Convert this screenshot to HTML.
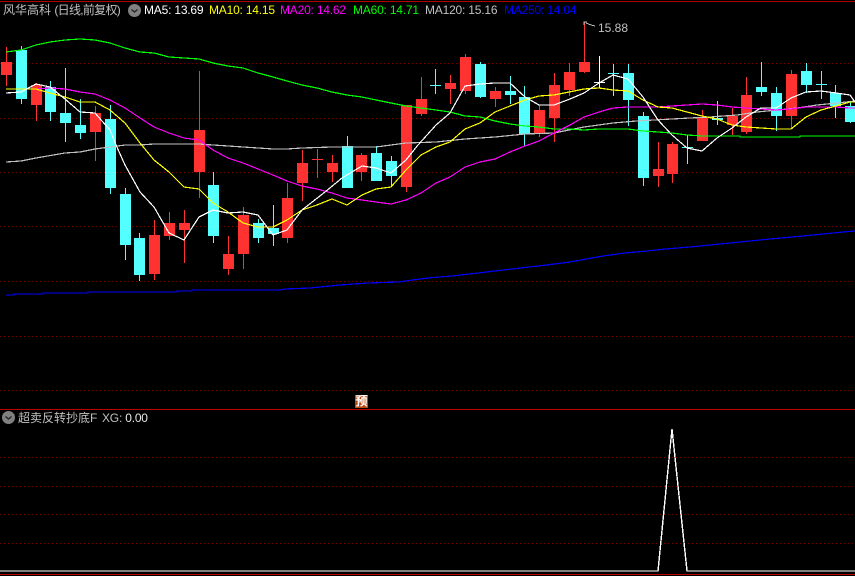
<!DOCTYPE html>
<html><head><meta charset="utf-8">
<style>
html,body{margin:0;padding:0;background:#000;width:855px;height:576px;overflow:hidden}
#w{position:relative;width:855px;height:576px;background:#000;overflow:hidden}
svg{position:absolute;left:0;top:0}
.t{position:absolute;white-space:pre;font:12px/14px "Liberation Sans","WenQuanYi Zen Hei",sans-serif;color:#c0c0c0}
.m{letter-spacing:-.2px}
.c{position:absolute;width:13px;height:13px;border-radius:50%;background:#808080}
.c svg{left:0;top:0}
</style></head><body><div id="w">
<svg width="855" height="576" viewBox="0 0 855 576" shape-rendering="crispEdges">
<g fill="none" stroke="#7a0000" stroke-width="1" stroke-dasharray="1 3">
<path d="M0 63.5H855M0 118.5H855M0 172.5H855M0 226.5H855M0 281.5H855M0 336.5H855M0 390.5H855"/>
<path d="M0 457.5H855M0 486.5H855M0 514.5H855M0 543.5H855"/>
</g>
<rect x="0" y="1" width="855" height="1" fill="#b00000"/>
<rect x="0" y="409" width="855" height="1" fill="#c00000"/>
<rect x="0" y="574" width="855" height="1" fill="#c00000"/>
<path fill="#ff3232" d="M1 62h11v13h-11zM6 47h1v39h-1z
M31 85h11v20h-11zM36 83h1v38h-1z
M90 113h11v19h-11zM95 106h1v55h-1z
M149 235h11v39h-11zM154 220h1v60h-1z
M164 223h11v13h-11zM169 212h1v28h-1z
M179 223h11v7h-11zM184 210h1v53h-1z
M194 130h11v42h-11zM199 71h1v127h-1z
M223 254h11v15h-11zM228 236h1v39h-1z
M238 215h11v39h-11zM243 207h1v62h-1z
M282 198h11v40h-11zM287 183h1v60h-1z
M297 163h11v20h-11zM302 150h1v51h-1z
M312 159h11v1h-11zM317 149h1v29h-1z
M327 163h11v9h-11zM332 155h1v27h-1z
M356 155h11v17h-11zM361 153h1v28h-1z
M401 105h11v82h-11zM406 105h1v87h-1z
M416 99h11v15h-11zM421 77h1v39h-1z
M445 83h11v6h-11zM450 75h1v29h-1z
M460 57h11v34h-11zM465 54h1v40h-1z
M490 91h11v8h-11zM495 87h1v20h-1z
M534 110h11v24h-11zM539 105h1v32h-1z
M549 85h11v33h-11zM554 73h1v69h-1z
M564 72h11v18h-11zM569 63h1v33h-1z
M579 62h11v10h-11zM584 22h1v51h-1z
M653 169h11v7h-11zM658 142h1v45h-1z
M667 144h11v30h-11zM672 142h1v41h-1z
M697 118h11v23h-11zM702 110h1v31h-1z
M727 116h11v9h-11zM732 108h1v27h-1z
M741 95h11v37h-11zM746 77h1v57h-1z
M786 74h11v42h-11zM791 70h1v58h-1z"/>
<path fill="#54ffff" d="M16 50h11v49h-11zM21 46h1v58h-1z
M45 87h11v25h-11zM50 81h1v40h-1z
M60 113h11v10h-11zM65 68h1v74h-1z
M75 125h11v8h-11zM80 99h1v40h-1z
M105 119h11v69h-11zM110 105h1v89h-1z
M120 194h11v51h-11zM125 188h1v72h-1z
M134 238h11v37h-11zM139 233h1v48h-1z
M208 185h11v51h-11zM213 172h1v71h-1z
M253 223h11v15h-11zM258 219h1v24h-1z
M268 228h11v6h-11zM273 205h1v41h-1z
M342 146h11v42h-11zM347 136h1v52h-1z
M371 153h11v28h-11zM376 146h1v35h-1z
M386 161h11v15h-11zM391 156h1v30h-1z
M430 85h11v1h-11zM435 69h1v25h-1z
M475 64h11v33h-11zM480 62h1v36h-1z
M505 91h11v4h-11zM510 76h1v28h-1z
M519 97h11v37h-11zM524 86h1v60h-1z
M608 73h11v1h-11zM613 64h1v32h-1z
M623 73h11v27h-11zM628 64h1v62h-1z
M638 116h11v62h-11zM643 112h1v74h-1z
M682 147h11v1h-11zM687 135h1v29h-1z
M712 118h11v2h-11zM717 101h1v24h-1z
M756 87h11v5h-11zM761 62h1v34h-1z
M771 93h11v23h-11zM776 87h1v44h-1z
M801 71h11v14h-11zM806 63h1v30h-1z
M816 84h11v1h-11zM821 71h1v28h-1z
M830 93h11v13h-11zM835 85h1v33h-1z
M845 106h10v16h-10zM850 102h1v21h-1z"/>
<path fill="#ffffff" d="M594 82h11v1h-11zM599 56h1v32h-1z"/>
<g fill="none" stroke-width="1.2">
<polyline stroke="#c0c0c0" points="6,162 21,161 36,158 65,153 80,152 95,149 110,147 125,145 140,145 154,144 199,144 213,145 228,146 243,147 258,148 273,149 287,149 302,148 332,147 347,147 376,147 406,143 436,142 465,139 495,137 525,134 554,133 569,130 584,127 613,123 636,121 690,118 710,117 737,115 757,112 797,108 817,105 837,103 855,101"/>
<polyline stroke="#0000ff" points="6,295 14,295 14,294 43,294 43,293 88,293 88,292 177,292 177,291 192,291 192,290 280,290 285,289 310,288 340,285 368,283 398,282 428,278 452,276 478,273 512,269 538,266 570,262 603,256 625,253 647,251 665,249 690,247 720,244 750,241 770,239 803,236 843,232 855,231"/>
<polyline stroke="#00ff00" points="6,52 21,50 36,45 50,42 65,40 80,39 95,40 110,43 125,48 140,52 154,53 169,57 184,58 199,59 213,63 228,66 243,68 258,73 273,77 287,81 302,85 317,88 332,92 347,95 362,97 376,100 391,103 406,106 421,108 436,110 450,112 465,116 480,117 495,121 510,124 525,126 539,127 554,129 569,129 584,130 599,129 628,129 643,131 658,132 672,133 687,135 702,136 740,136 740,137 800,137 800,136 855,136"/>
<polyline stroke="#ff00ff" points="6,89 21,89 36,89 50,88 65,89 80,92 95,94 110,100 125,108 140,118 154,127 169,133 184,138 199,140 213,150 228,158 243,163 258,169 273,175 287,181 302,186 317,189 332,193 347,198 362,200 376,202 391,204 406,200 421,193 436,183 450,177 465,167 480,162 495,159 510,152 525,146 539,141 554,133 570,125 584,117 599,112 613,108 628,107 643,107 658,107 672,106 687,105 702,104 717,105 732,107 746,108 761,109 776,110 791,109 806,107 821,107 836,107 850,108 855,108"/>
<polyline stroke="#ffff00" points="6,89 21,89 36,89 50,93 65,97 80,102 95,102 110,110 125,123 140,143 154,160 169,172 184,187 199,189 213,203 228,212 243,223 258,227 273,227 287,220 302,210 317,205 332,199 347,205 362,195 376,189 391,187 406,170 421,155 436,147 450,142 465,129 480,123 495,112 510,106 525,100 539,96 554,95 569,92 584,89 599,88 613,90 628,91 643,100 658,107 672,108 687,112 702,116 717,119 732,125 746,127 761,128 776,129 791,129 806,117 821,110 836,106 850,102 855,102"/>
<polyline stroke="#ffffff" points="6,93 21,92 36,84 50,87 65,99 80,112 95,113 110,130 116,145 125,165 140,192 154,207 169,233 184,240 199,217 213,210 228,213 243,212 258,215 273,235 287,230 302,210 325,192 342,178 362,166 376,168 391,173 406,160 418,145 436,125 450,113 465,86 480,84 495,83 510,83 525,97 539,105 554,105 570,99 584,93 599,83 613,75 628,79 643,97 658,120 672,135 687,148 692,149 702,151 717,138 732,128 746,117 761,108 776,108 791,98 806,92 821,91 836,93 850,95 855,102"/>
<polyline stroke="#ffffff" points="0,571 658,571 672,429 687,571 855,571"/>
<polyline stroke="#ffffff" stroke-width="1.4" points="658,571 672,429 687,571"/>
<polyline stroke="#c0c0c0" stroke-width="1" points="584,25 584,22 587,22"/>
<polyline stroke="#c0c0c0" stroke-width="1" points="586,23 591,25 595,26"/>
</g>
<rect x="355" y="395" width="13" height="13" fill="#b84a14"/>
</svg>
<div class="t" style="left:3px;top:3px">风华高科 <span style="letter-spacing:-.7px">(日线,前复权)</span></div>
<div class="c" style="left:128px;top:4px"><svg width="13" height="13"><path d="M3.5 5.5L6.5 8L9.5 5.5" fill="none" stroke="#222" stroke-width="1.3"/></svg></div>
<div class="t m" style="left:144px;top:3px;color:#fff">MA5: 13.69</div>
<div class="t m" style="left:209px;top:3px;color:#ff0">MA10: 14.15</div>
<div class="t m" style="left:280px;top:3px;color:#f0f">MA20: 14.62</div>
<div class="t m" style="left:353px;top:3px;color:#0f0">MA60: 14.71</div>
<div class="t m" style="left:425px;top:3px;color:#c0c0c0">MA120: 15.16</div>
<div class="t m" style="left:504px;top:3px;color:#00f">MA250: 14.04</div>
<div class="t" style="left:598px;top:21px;color:#c0c0c0">15.88</div>
<div class="t" style="left:355px;top:394px;width:13px;text-align:center;color:#fff;font-weight:bold">预</div>
<div class="c" style="left:2px;top:411px"><svg width="13" height="13"><path d="M3.5 5.5L6.5 8L9.5 5.5" fill="none" stroke="#222" stroke-width="1.3"/></svg></div>
<div class="t" style="left:18px;top:411px">超卖反转抄底F</div>
<div class="t m" style="left:102px;top:411px">XG: <span style="color:#e8e8e8">0.00</span></div>
</div></body></html>
